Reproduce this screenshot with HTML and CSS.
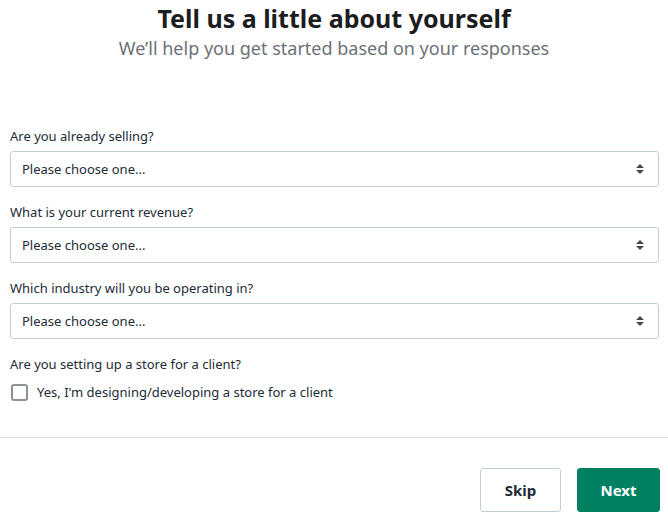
FILE: index.html
```html
<!DOCTYPE html>
<html>
<head>
<meta charset="utf-8">
<link rel="stylesheet" href="styles.css">
</head>
<body>
<div class="page">
  <header class="head">
    <h1 class="title">Tell us a little about yourself</h1>
    <p class="subtitle">We’ll help you get started based on your responses</p>
  </header>
  <form class="form">
    <div class="field">
      <label class="label">Are you already selling?</label>
      <div class="select"><span>Please choose one...</span><svg class="arrows" width="10" height="12" viewBox="0 0 10 12"><path d="M5 1 L9 5 L1 5 Z M5 11 L9 7 L1 7 Z" fill="#474747"/></svg></div>
    </div>
    <div class="field">
      <label class="label">What is your current revenue?</label>
      <div class="select"><span>Please choose one...</span><svg class="arrows" width="10" height="12" viewBox="0 0 10 12"><path d="M5 1 L9 5 L1 5 Z M5 11 L9 7 L1 7 Z" fill="#474747"/></svg></div>
    </div>
    <div class="field">
      <label class="label">Which industry will you be operating in?</label>
      <div class="select"><span>Please choose one...</span><svg class="arrows" width="10" height="12" viewBox="0 0 10 12"><path d="M5 1 L9 5 L1 5 Z M5 11 L9 7 L1 7 Z" fill="#474747"/></svg></div>
    </div>
    <div class="field">
      <label class="label">Are you setting up a store for a client?</label>
      <div class="check-row"><span class="checkbox"></span><span>Yes, I'm designing/developing a store for a client</span></div>
    </div>
  </form>
  <div class="divider"></div>
  <div class="actions">
    <button class="btn btn-skip" type="button">Skip</button>
    <button class="btn btn-next" type="button">Next</button>
  </div>
</div>
</body>
</html>
```
FILE: styles.css
```css
* { box-sizing: border-box; }
html, body { margin: 0; padding: 0; background: #fff; }
body { font-family: "Noto Sans", "Open Sans", sans-serif; color: #212b36; }
.page { width: 668px; }
.head { text-align: center; padding-top: 0; }
.title { margin: 0; font-size: 25px; font-weight: 700; line-height: 36px; color: #1b1d20; }
.subtitle { margin: 0; font-size: 18px; line-height: 24px; color: #6b7177; }
.form { padding: 67px 9px 0 10px; display: flex; flex-direction: column; gap: 16px; }
.field { display: flex; flex-direction: column; gap: 6px; }
.label { font-size: 13px; line-height: 18px; color: #212b36; }
.select { height: 36px; border: 1px solid #c4cdd5; border-radius: 3px; display: flex; align-items: center; justify-content: space-between; padding: 0 13px 0 11px; font-size: 13px; color: #212b36; }
.arrows { display: block; }
.check-row { display: flex; align-items: center; gap: 9px; font-size: 13px; padding-left: 1px; margin-top: 4px; }
.checkbox { width: 17px; height: 17px; border: 2px solid #8c9196; border-radius: 3px; }
.divider { height: 1px; background: #dfe3e8; margin-top: 36px; }
.actions { display: flex; justify-content: flex-end; gap: 16px; padding: 30px 8px 0 0; }
.btn { height: 44px; border-radius: 3px; font-family: inherit; font-size: 15px; font-weight: 700; cursor: pointer; }
.btn-skip { width: 81px; background: #fff; border: 1px solid #c4cdd5; color: #212b36; }
.btn-next { width: 83px; background: #008060; border: 1px solid #008060; color: #fff; }
```
